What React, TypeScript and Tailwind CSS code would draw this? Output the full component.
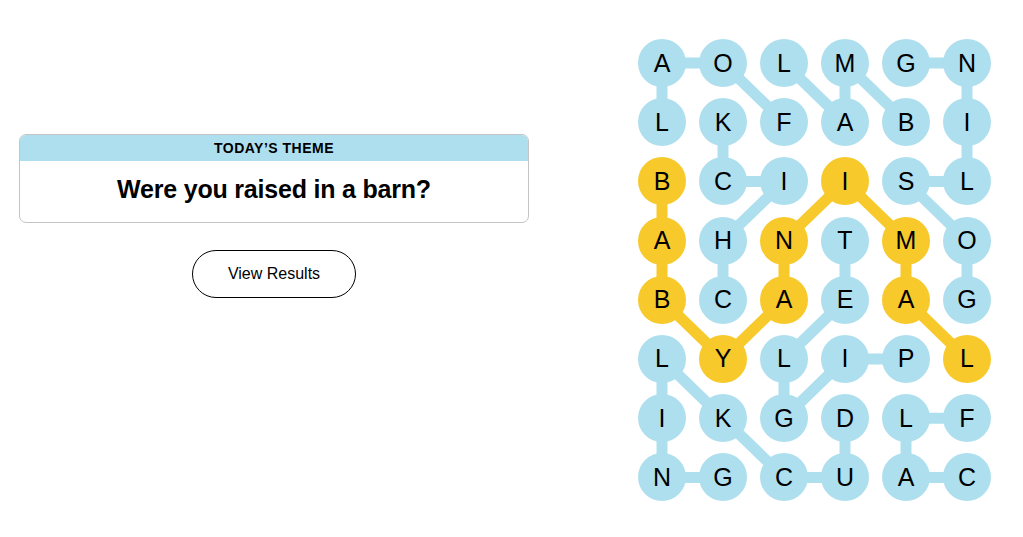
import React from "react";

const LETTERS = [
  "AOLMGN",
  "LKFABI",
  "BCIISL",
  "AHNTMO",
  "BCAEAG",
  "LYLIPL",
  "IKGDLF",
  "NGCUAC",
];

const BLUE = "#aedfee";
const YELLOW = "#f7c92b";

// Found words as paths through [row, col] cells.
const WORDS: { cells: [number, number][]; spangram?: boolean }[] = [
  { cells: [[1, 2], [0, 1], [0, 0], [1, 0]] }, // FOAL
  { cells: [[0, 2], [1, 3], [0, 3], [1, 4]] }, // LAMB
  { cells: [[4, 5], [3, 5], [2, 4], [2, 5], [1, 5], [0, 5], [0, 4]] }, // GOSLING
  { cells: [[4, 1], [3, 1], [2, 2], [2, 1], [1, 1]] }, // CHICK
  { cells: [[5, 4], [5, 3], [6, 2], [5, 2], [4, 3], [3, 3]] }, // PIGLET
  { cells: [[6, 3], [7, 3], [7, 2], [6, 1], [5, 0], [6, 0], [7, 0], [7, 1]] }, // DUCKLING
  { cells: [[7, 5], [7, 4], [6, 4], [6, 5]] }, // CALF
  {
    cells: [
      [2, 0], [3, 0], [4, 0], [5, 1], [4, 2], [3, 2], [2, 3], [3, 4], [4, 4], [5, 5],
    ],
    spangram: true,
  }, // BABYANIMAL
];

const CELL = 48;
const DX = 61;
const DY = 59.2;
const W = DX * 5 + CELL;
const H = DY * 7 + CELL;

const cx = (c: number) => CELL / 2 + DX * c;
const cy = (r: number) => CELL / 2 + DY * r;

const yellowCells = new Set<string>();
WORDS.filter((w) => w.spangram).forEach((w) =>
  w.cells.forEach(([r, c]) => yellowCells.add(`${r}-${c}`))
);

function Board() {
  return (
    <div className="relative" style={{ width: W, height: H }}>
      <svg className="absolute left-0 top-0" width={W} height={H}>
        {WORDS.map((w, i) =>
          w.cells.slice(1).map(([r, c], j) => {
            const [pr, pc] = w.cells[j];
            return (
              <line
                key={`${i}-${j}`}
                x1={cx(pc)}
                y1={cy(pr)}
                x2={cx(c)}
                y2={cy(r)}
                stroke={w.spangram ? YELLOW : BLUE}
                strokeWidth={11}
              />
            );
          })
        )}
      </svg>
      <div className="relative grid grid-cols-[repeat(6,48px)] grid-rows-[repeat(8,48px)] gap-x-[13px] gap-y-[11.2px]">
        {LETTERS.map((row, r) =>
          row.split("").map((ch, c) => (
            <div
              key={`${r}-${c}`}
              className={`flex h-12 w-12 items-center justify-center rounded-full text-[25px] leading-none text-black ${
                yellowCells.has(`${r}-${c}`) ? "bg-[#f7c92b]" : "bg-[#aedfee]"
              }`}
            >
              {ch}
            </div>
          ))
        )}
      </div>
    </div>
  );
}

export default function App() {
  return (
    <div
      className="flex h-[537px] w-[1023px] bg-white text-black"
      style={{ fontFamily: '"Liberation Sans", Arial, sans-serif' }}
    >
      <div className="flex w-[548px] flex-col items-center px-[19px] pt-[134px]">
        <div className="w-full overflow-hidden rounded-[7px] border border-[#c4c4c4]">
          <div className="flex h-[26px] items-center justify-center bg-[#aedfee] text-[14px] font-bold uppercase tracking-[0.5px]">
            Today’s Theme
          </div>
          <div className="flex h-[61px] items-center justify-center pb-[4px] text-[25px] font-bold tracking-[-0.2px]">
            Were you raised in a barn?
          </div>
        </div>
        <button className="mt-[27px] flex h-[48px] w-[164px] items-center justify-center rounded-full border border-black bg-white text-[16px]">
          View Results
        </button>
      </div>
      <div className="pl-[90px] pt-[39px]">
        <Board />
      </div>
    </div>
  );
}
